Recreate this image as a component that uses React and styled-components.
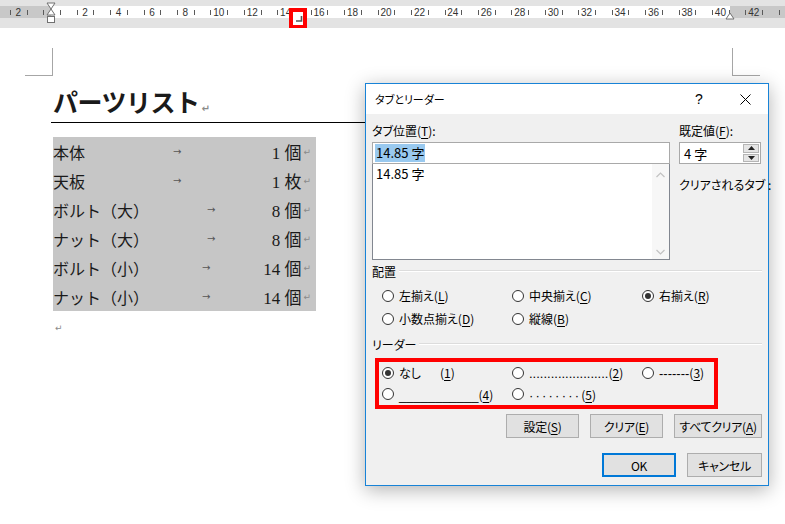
import React from 'react'
import styled, { createGlobalStyle } from 'styled-components'

const CH = 16.72
const ZERO = 51.6

const GlobalStyle = createGlobalStyle`
  html, body {
    margin: 0;
    padding: 0;
    background: #fff;
    overflow: hidden;
  }
  body {
    width: 785px;
    height: 524px;
    position: relative;
    font-family: "Noto Sans CJK JP", sans-serif;
  }
`

const RulerSvg = styled.svg`
  display: block;
`

const Ruler = () => {
  const ticks = []
  for (let i = -4; i <= 44; i++) {
    const x = Math.round(ZERO + (i + 0.5) * CH) + 0.5
    ticks.push(<line key={i} x1={x} x2={x} y1={10} y2={15} stroke="#5a5a5a" strokeWidth="1" />)
  }
  const nums = []
  for (let n = -2; n <= 42; n += 2) {
    if (n === 0) continue
    nums.push(
      <text key={n} x={ZERO + n * CH} y={15.5} textAnchor="middle" fontSize="10" fill="#333" fontFamily="Liberation Sans, sans-serif">
        {Math.abs(n)}
      </text>
    )
  }
  return (
    <RulerSvg width="785" height="28">
      <rect x="0" y="0" width="785" height="28" fill="#e3e3e3" />
      <rect x="0" y="6" width="785" height="12" fill="#c8c8c8" />
      <rect x="51" y="6" width="679" height="12" fill="#fff" />
      {ticks}
      {nums}
      {/* indent markers */}
      <polygon points="47,3 55,3 51,9" fill="#fff" stroke="#707070" />
      <polygon points="51,9 47,15 55,15" fill="#fff" stroke="#707070" />
      <rect x="47.5" y="16.5" width="7" height="6" fill="#fff" stroke="#707070" />
      <polygon points="730,13 726,19 734,19" fill="#fff" stroke="#707070" />
      {/* right tab stop, marked */}
      <rect x="291" y="10" width="14" height="17" fill="#fff" stroke="#ff0000" strokeWidth="4" />
      <path d="M296 21 H301.5 V16" fill="none" stroke="#555" strokeWidth="1.6" />
    </RulerSvg>
  )
}

// document
const Corners = styled.div`
  display: flex;
  justify-content: space-between;
  padding: 20px 25px 0;
`
const Corner = styled.div`
  width: 27px;
  height: 27px;
  border-bottom: 1px solid #a6a6a6;
  ${p => (p.$side === 'left' ? 'border-right' : 'border-left')}: 1px solid #a6a6a6;
`
const Body = styled.div`
  margin-left: 51px;
  width: 679px;
  font-family: "Liberation Serif", "Noto Sans CJK JP", serif;
  color: #1a1a1a;
`
const Heading = styled.h1`
  margin: 0;
  padding-top: 10px;
  height: 36px;
  line-height: 36px;
  font-size: 25px;
  font-weight: 700;
  border-bottom: 1px solid #000;
  padding-left: 2px;
  letter-spacing: -0.5px;
`
const Mark = styled.span`
  font-family: "DejaVu Sans", sans-serif;
  font-size: ${p => p.$size || 9}px;
  color: #8a8a8a;
  margin-left: 2px;
`
const Table = styled.div`
  margin: 14px 0 0 2px;
  width: 263px;
  background: #c6c6c6;
`
const Row = styled.div`
  display: grid;
  grid-template-columns: ${p => p.$arrow}px 12px 1fr auto;
  align-items: center;
  height: 29px;
  padding-right: 5px;
  font-size: 16px;
`
const Label = styled.span`
  white-space: nowrap;
`
const Arrow = styled.span`
  font-family: "DejaVu Sans", sans-serif;
  font-size: 10px;
  color: #555;
`
const Qty = styled.span`
  text-align: right;
  font-size: 17px;
  white-space: nowrap;
`
const EmptyPara = styled.div`
  height: 29px;
  line-height: 29px;
  padding-left: 2px;
`

// dialog
const Dialog = styled.div`
  position: absolute;
  left: 365px;
  top: 83px;
  width: 404px;
  height: 403px;
  box-sizing: border-box;
  border: 1px solid #1883d7;
  background: #f0f0f0;
  box-shadow: 0 4px 18px rgba(0, 0, 0, 0.3);
  font-family: "Noto Sans CJK JP", sans-serif;
  font-feature-settings: "palt";
  font-size: 12px;
  color: #000;
`
const TitleBar = styled.div`
  height: 30px;
  background: #fff;
  display: flex;
  align-items: center;
  padding-left: 9px;
`
const Title = styled.div`
  flex: 1;
  font-size: 11px;
`
const TitleButton = styled.div`
  width: 46px;
  height: 30px;
  display: flex;
  align-items: center;
  justify-content: center;
  font-family: "Liberation Sans", sans-serif;
  font-size: 14px;
`
const Content = styled.div`
  padding: 8px 6px 0;
`
const TopGrid = styled.div`
  display: grid;
  grid-template-columns: 298px 82px;
  column-gap: 9px;
`
const FieldLabel = styled.div`
  height: 18px;
  line-height: 18px;
  white-space: nowrap;
`
const U = styled.span`
  text-decoration: underline;
  text-underline-offset: 2px;
`
const TextBox = styled.div`
  margin-top: 2px;
  height: 22px;
  box-sizing: border-box;
  border: 1px solid #a9a9a9;
  background: #fff;
  display: flex;
  align-items: center;
  padding-left: 2px;
`
const Selected = styled.span`
  background: #99c9ef;
  line-height: 18px;
  padding: 0 1px;
  font-size: 13px;
`
const ListBox = styled.div`
  height: 96px;
  box-sizing: border-box;
  border: 1px solid #828790;
  border-top: none;
  background: #fff;
  display: flex;
`
const ListItems = styled.div`
  flex: 1;
  padding: 1px 0 0 3px;
  line-height: 18px;
  font-size: 13px;
`
const ScrollBar = styled.div`
  width: 17px;
  background: #f7f7f7;
  display: flex;
  flex-direction: column;
  justify-content: space-between;
  align-items: center;
  padding: 8px 0 4px;
`
const SpinBox = styled.div`
  margin-top: 2px;
  height: 22px;
  box-sizing: border-box;
  border: 1px solid #a9a9a9;
  background: #fff;
  display: flex;
`
const SpinValue = styled.div`
  flex: 1;
  display: flex;
  align-items: center;
  padding-left: 4px;
  font-size: 13px;
`
const SpinButtons = styled.div`
  width: 16px;
  display: flex;
  flex-direction: column;
  padding: 1px 1px 1px 0;
  gap: 1px;
`
const SpinButton = styled.div`
  flex: 1;
  background: #e5e5e5;
  border: 1px solid #b5b5b5;
  display: flex;
  align-items: center;
  justify-content: center;
`
const ClearLabel = styled.div`
  margin-top: 12px;
  line-height: 18px;
  white-space: nowrap;
`
const SectionHeader = styled.div`
  display: flex;
  align-items: center;
  gap: 3px;
  height: 18px;
  margin-top: ${p => p.$top}px;
`
const Rule = styled.div`
  flex: 1;
  border-top: 1px solid #dcdcdc;
  border-bottom: 1px solid #fff;
`
const RadioGrid = styled.div`
  display: grid;
  grid-template-columns: 130px 130px auto;
  grid-auto-rows: 23px;
  align-items: center;
  padding-left: 10px;
  margin-top: 4px;
`
const RadioItem = styled.div`
  display: flex;
  align-items: center;
  gap: 5px;
  white-space: nowrap;
`
const Circle = styled.span`
  width: 12px;
  height: 12px;
  box-sizing: border-box;
  border-radius: 50%;
  border: 1px solid #333;
  background: #fff;
  display: flex;
  align-items: center;
  justify-content: center;
  flex-shrink: 0;
  &::after {
    content: "";
    width: 6px;
    height: 6px;
    border-radius: 50%;
    background: ${p => (p.$on ? '#333' : 'transparent')};
  }
`
const LeaderBox = styled.div`
  margin: 5px 0 0 3px;
  width: 343px;
  height: 51px;
  box-sizing: border-box;
  border: 4px solid #ff0000;
  display: grid;
  grid-template-columns: 130px 130px auto;
  grid-template-rows: 21px 22px;
  align-items: center;
  padding-left: 3px;
`
const Leader = styled.span`
  font-family: "Liberation Sans", sans-serif;
  font-size: 13px;
  letter-spacing: ${p => p.$ls || 0}px;
`
const Gap = styled.span`
  display: inline-block;
  width: ${p => p.$w}px;
`
const ButtonRow = styled.div`
  display: flex;
  justify-content: flex-end;
  gap: 11px;
  margin-top: ${p => p.$top}px;
`
const Button = styled.div`
  width: ${p => p.$w}px;
  height: 24px;
  box-sizing: border-box;
  background: #e1e1e1;
  border: ${p => (p.$primary ? '2px solid #0078d7' : '1px solid #adadad')};
  display: flex;
  align-items: center;
  justify-content: center;
  white-space: nowrap;
  letter-spacing: -0.3px;
`

const Radio = ({ on, children }) => (
  <RadioItem>
    <Circle $on={on} />
    <span>{children}</span>
  </RadioItem>
)

const rows = [
  { label: '本体', arrow: 120, qty: '1 個' },
  { label: '天板', arrow: 120, qty: '1 枚' },
  { label: 'ボルト（大）', arrow: 154, qty: '8 個' },
  { label: 'ナット（大）', arrow: 154, qty: '8 個' },
  { label: 'ボルト（小）', arrow: 149, qty: '14 個' },
  { label: 'ナット（小）', arrow: 149, qty: '14 個' },
]

export default function App() {
  return (
    <>
      <GlobalStyle />
      <Ruler />
      <Corners>
        <Corner $side="left" />
        <Corner $side="right" />
      </Corners>
      <Body>
        <Heading>
          パーツリスト<Mark $size={10}>↵</Mark>
        </Heading>
        <Table>
          {rows.map(r => (
            <Row key={r.label} $arrow={r.arrow}>
              <Label>{r.label}</Label>
              <Arrow>→</Arrow>
              <Qty>{r.qty}</Qty>
              <Mark>↵</Mark>
            </Row>
          ))}
        </Table>
        <EmptyPara>
          <Mark>↵</Mark>
        </EmptyPara>
      </Body>

      <Dialog>
        <TitleBar>
          <Title>タブとリーダー</Title>
          <TitleButton>?</TitleButton>
          <TitleButton>
            <svg width="11" height="11" viewBox="0 0 11 11">
              <path d="M0.5 0.5 L10.5 10.5 M10.5 0.5 L0.5 10.5" stroke="#000" strokeWidth="1" />
            </svg>
          </TitleButton>
        </TitleBar>
        <Content>
          <TopGrid>
            <div>
              <FieldLabel>
                タブ位置(<U>T</U>):
              </FieldLabel>
              <TextBox>
                <Selected>14.85 字</Selected>
              </TextBox>
              <ListBox>
                <ListItems>14.85 字</ListItems>
                <ScrollBar>
                  <svg width="9" height="6" viewBox="0 0 9 6">
                    <path d="M0.5 5 L4.5 1 L8.5 5" fill="none" stroke="#c2c2c2" strokeWidth="1.2" />
                  </svg>
                  <svg width="9" height="6" viewBox="0 0 9 6">
                    <path d="M0.5 1 L4.5 5 L8.5 1" fill="none" stroke="#c2c2c2" strokeWidth="1.2" />
                  </svg>
                </ScrollBar>
              </ListBox>
            </div>
            <div>
              <FieldLabel>
                既定値(<U>F</U>):
              </FieldLabel>
              <SpinBox>
                <SpinValue>4 字</SpinValue>
                <SpinButtons>
                  <SpinButton>
                    <svg width="7" height="4" viewBox="0 0 7 4">
                      <path d="M0 4 L3.5 0 L7 4 Z" fill="#222" />
                    </svg>
                  </SpinButton>
                  <SpinButton>
                    <svg width="7" height="4" viewBox="0 0 7 4">
                      <path d="M0 0 L3.5 4 L7 0 Z" fill="#222" />
                    </svg>
                  </SpinButton>
                </SpinButtons>
              </SpinBox>
              <ClearLabel>クリアされるタブ :</ClearLabel>
            </div>
          </TopGrid>

          <SectionHeader $top={2}>
            <span>配置</span>
            <Rule />
          </SectionHeader>
          <RadioGrid>
            <Radio>左揃え(<U>L</U>)</Radio>
            <Radio>中央揃え(<U>C</U>)</Radio>
            <Radio on>右揃え(<U>R</U>)</Radio>
            <Radio>小数点揃え(<U>D</U>)</Radio>
            <Radio>縦線(<U>B</U>)</Radio>
          </RadioGrid>

          <SectionHeader $top={5}>
            <span>リーダー</span>
            <Rule />
          </SectionHeader>
          <LeaderBox>
            <Radio on>
              なし<Gap $w={19} />(<U>1</U>)
            </Radio>
            <Radio>
              <Leader>......................</Leader>(<U>2</U>)
            </Radio>
            <Radio>
              <Leader>-------</Leader>(<U>3</U>)
            </Radio>
            <Radio>
              <Leader>___________</Leader>(<U>4</U>)
            </Radio>
            <Radio>
              <Leader $ls={2.2}>········</Leader>(<U>5</U>)
            </Radio>
          </LeaderBox>

          <ButtonRow $top={5}>
            <Button $w={73}>
              設定(<U>S</U>)
            </Button>
            <Button $w={73}>
              クリア(<U>E</U>)
            </Button>
            <Button $w={88}>
              すべてクリア(<U>A</U>)
            </Button>
          </ButtonRow>
          <ButtonRow $top={15}>
            <Button $w={74} $primary>
              OK
            </Button>
            <Button $w={75}>キャンセル</Button>
          </ButtonRow>
        </Content>
      </Dialog>
    </>
  )
}
